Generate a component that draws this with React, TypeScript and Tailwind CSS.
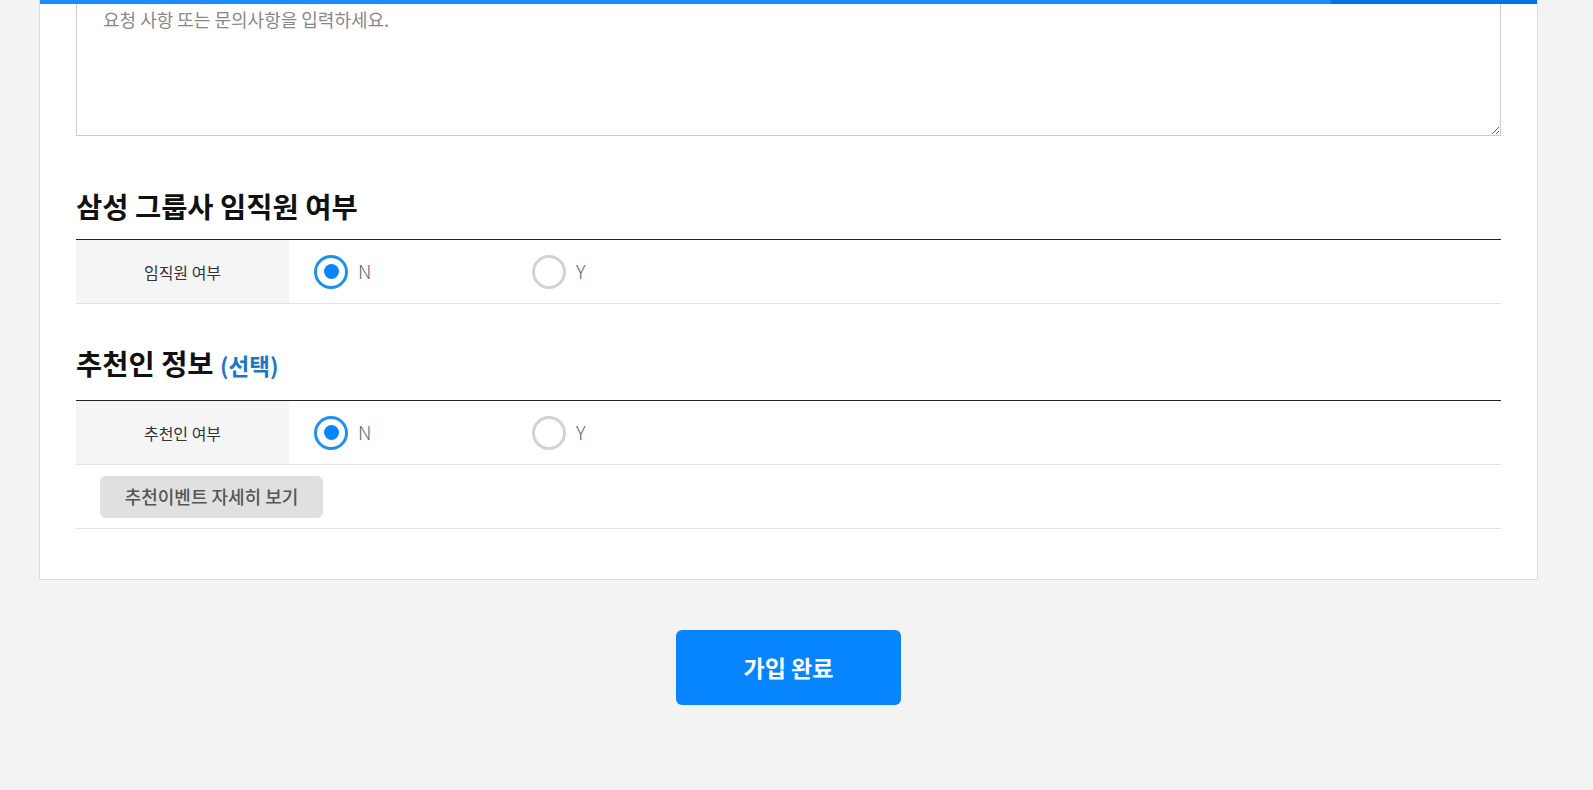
import { useState } from 'react';

const font = { fontFamily: '"Noto Sans CJK KR", "Noto Sans", sans-serif' };

function Radio({ checked, label, onClick }: { checked: boolean; label: string; onClick: () => void }) {
  return (
    <button type="button" onClick={onClick} className="flex items-center gap-[10px] w-[218px]">
      <span
        className={`w-[34px] h-[34px] rounded-full border-[3px] flex items-center justify-center ${
          checked ? 'border-[#1e90f0]' : 'border-[#d2d2d2]'
        }`}
      >
        {checked && <span className="w-[15px] h-[15px] rounded-full bg-[#0a84ff]" />}
      </span>
      <span className="text-[19px] font-light text-[#666]">{label}</span>
    </button>
  );
}

function RadioRow({ title }: { title: string }) {
  const [value, setValue] = useState('N');
  return (
    <div className="flex h-[64px] border-b border-[#e2e2e2]">
      <div className="w-[213px] bg-[#f5f5f5] flex items-center justify-center text-[16px] text-[#333]">
        {title}
      </div>
      <div className="flex items-center pl-[25px]">
        <Radio checked={value === 'N'} label="N" onClick={() => setValue('N')} />
        <Radio checked={value === 'Y'} label="Y" onClick={() => setValue('Y')} />
      </div>
    </div>
  );
}

export default function App() {
  return (
    <div className="min-h-[790px] bg-[#f3f3f3] pl-[39px] pr-[55px]" style={font}>
      <div className="bg-white border-x border-b border-[#dcdcdc]">
        {/* 진행 바 */}
        <div className="flex h-[4px]">
          <div className="w-[1291px] bg-[#1a8cff]" />
          <div className="flex-1 bg-[#0073e6]" />
        </div>

        <div className="px-[36px] pb-[50px]">
          <textarea
            className="block w-full h-[132px] border border-t-0 border-[#cccccc] px-[26px] pt-[1px] text-[18px] leading-[28px] text-[#333] placeholder:text-[#888] outline-none"
            placeholder="요청 사항 또는 문의사항을 입력하세요."
          />

          <h2 className="mt-[50px] mb-[13px] text-[28.5px] leading-[40px] font-bold text-[#111]">
            삼성 그룹사 임직원 여부
          </h2>
          <div className="border-t border-[#222]">
            <RadioRow title="임직원 여부" />
          </div>

          <h2 className="mt-[39px] mb-[15px] text-[28.5px] leading-[40px] font-bold text-[#111]">
            추천인 정보 <span className="text-[22.5px] text-[#1a78c2]">(선택)</span>
          </h2>
          <div className="border-t border-[#222]">
            <RadioRow title="추천인 여부" />
            <div className="h-[64px] flex items-center pl-[24px] border-b border-[#e2e2e2]">
              <button
                type="button"
                className="h-[42px] w-[223px] rounded-[6px] bg-[#e0e0e0] text-[18px] font-medium text-[#555]"
              >
                추천이벤트 자세히 보기
              </button>
            </div>
          </div>
        </div>
      </div>

      <div className="flex justify-center pt-[50px]">
        <button
          type="button"
          className="w-[225px] h-[75px] rounded-[6px] bg-[#0785ff] text-white text-[23px] font-bold"
        >
          가입 완료
        </button>
      </div>
    </div>
  );
}
